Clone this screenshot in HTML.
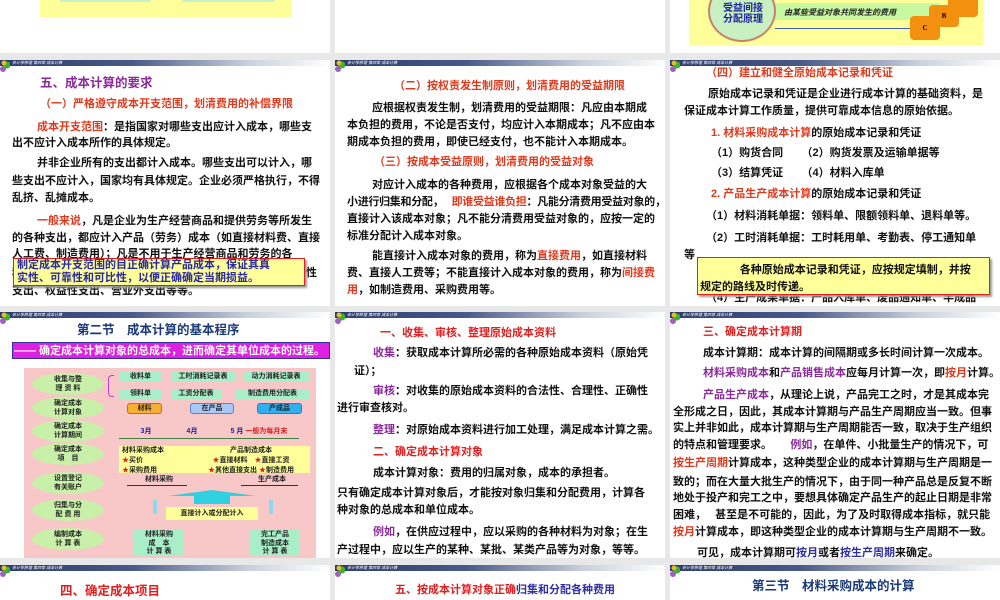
<!DOCTYPE html>
<html><head><meta charset="utf-8"><style>
*{margin:0;padding:0;box-sizing:border-box}
body{width:1000px;height:600px;background:#e8e8e8;position:relative;overflow:hidden;font-family:"Liberation Sans","Noto Sans CJK SC",sans-serif}
.s{position:absolute;background:#fff;overflow:hidden}
.hb{position:absolute;left:0;top:0;width:100%;height:6px;background:linear-gradient(90deg,#2a3a6a 0%,#4a5a88 40%,#c8d0dc 75%,#fff 100%)}
.hb i{position:absolute;left:12px;top:0;font-size:4px;color:#fff;font-style:italic;line-height:6px}
.lg{position:absolute;left:0;top:0;width:10px;height:12px}
.l{position:absolute;white-space:nowrap;font-weight:bold;font-size:11px;line-height:14px;color:#111}
.r{color:#e03a1e}.p{color:#8a2a9a}.b{color:#3030a0}.db{color:#1a3a7a}
.t{font-size:12.5px}
.box{position:absolute;background:#ffff99;border:1.5px solid #e02020;box-shadow:2px 2px 2px #999}
.el{position:absolute;left:8px;width:72px;height:22px;border-radius:50%;background:#c8f0a8;font-size:7px;font-weight:bold;color:#222;text-align:center;line-height:9px;padding-top:2px}
.g{position:absolute;background:#a8eec8;font-size:7px;font-weight:bold;text-align:center;line-height:10px;color:#222}
</style></head><body>

<!-- Row 1 -->
<div class="s" style="left:0;top:0;width:330px;height:53px">
 <div style="position:absolute;left:40px;top:0;width:252px;height:17px;background:#ffff99"></div>
 <div style="position:absolute;left:60px;top:0;width:91px;height:2px;background:#c8f0c8"></div>
 <div style="position:absolute;left:182px;top:0;width:93px;height:2px;background:#c8f0c8"></div>
</div>
<div class="s" style="left:335px;top:0;width:330px;height:53px"></div>
<div class="s" style="left:670px;top:0;width:330px;height:53px">
 <div style="position:absolute;left:19px;top:0;width:294px;height:45px;background:#ffff99"></div>
 <div style="position:absolute;left:100px;top:3px;width:170px;height:17px;background:#c8f8a0"></div>
 <div style="position:absolute;left:38px;top:-20px;width:68px;height:62px;border-radius:50%;background:#c8f0c0;border:2px solid #c88070"></div>
 <div class="l" style="left:53px;top:3px;color:#2020a0;font-size:10px;line-height:11px">受益间接<br>分配原理</div>
 <div class="l" style="left:114px;top:6px;font-style:italic;font-size:8px;color:#222">由某些受益对象共同发生的费用</div>
 <div style="position:absolute;left:105px;top:28px;width:140px;height:1px;background:#4060c0"></div>
 <div style="position:absolute;left:240px;top:25px;border-left:7px solid #4060c0;border-top:3px solid transparent;border-bottom:3px solid transparent"></div>
 <div style="position:absolute;left:278px;top:-5px;width:30px;height:22px;background:#f39010;border-radius:4px"></div>
 <div style="position:absolute;left:259px;top:5px;width:30px;height:22px;background:#f39010;border-radius:4px;font:bold 7px 'Liberation Serif';text-align:center;line-height:22px">B</div>
 <div style="position:absolute;left:240px;top:16px;width:30px;height:24px;background:#f39010;border-radius:4px;font:bold 7px 'Liberation Serif';text-align:center;line-height:24px">C</div>
</div>

<!-- Row 2 col1 -->
<div class="s" style="left:0;top:60px;width:330px;height:246px"><div class="hb"><i>会计学原理 第四章 成本计算</i></div></div>
<svg class="lg" style="left:0;top:60px"><circle cx="3" cy="9" r="3" fill="#a060c0"/><circle cx="7" cy="5" r="3.5" fill="#40b030"/><circle cx="4" cy="3" r="2.5" fill="#e0c020"/></svg>
<div class="l p t" style="left:40px;top:76px">五、成本计算的要求</div>
<div class="l r" style="left:40px;top:97px">（一）严格遵守成本开支范围，划清费用的补偿界限</div>
<div class="l" style="left:37px;top:120px"><span class="r">成本开支范围</span>：是指国家对哪些支出应计入成本，哪些支</div>
<div class="l" style="left:12px;top:136px">出不应计入成本所作的具体规定。</div>
<div class="l" style="left:37px;top:156px">并非企业所有的支出都计入成本。哪些支出可以计入，哪</div>
<div class="l" style="left:12px;top:174px">些支出不应计入，国家均有具体规定。企业必须严格执行，不得</div>
<div class="l" style="left:12px;top:191px">乱挤、乱摊成本。</div>
<div class="l" style="left:37px;top:214px"><span class="r">一般来说</span>，凡是企业为生产经营商品和提供劳务等所发生</div>
<div class="l" style="left:12px;top:231px">的各种支出，都应计入产品（劳务）成本（如直接材料费、直接</div>
<div class="l" style="left:12px;top:247px">人工费、制造费用）；凡是不用于生产经营商品和劳务的各</div>
<div class="l" style="left:12px;top:266px">种支出</div>
<div class="l" style="left:306px;top:266px">性</div>
<div class="l" style="left:12px;top:284px">支出、权益性支出、营业外支出等等。</div>
<div class="box" style="left:13px;top:258px;width:292px;height:28px"></div>
<div class="l" style="left:17px;top:259px;color:#2828a0;line-height:13px">制定成本开支范围的目正确计算产品成本，保证其真<br>实性、可靠性和可比性，以便正确确定当期损益。</div>

<!-- Row 2 col2 -->
<div class="s" style="left:335px;top:60px;width:330px;height:246px"><div class="hb"><i>会计学原理 第四章 成本计算</i></div></div>
<svg class="lg" style="left:335px;top:60px"><circle cx="3" cy="9" r="3" fill="#a060c0"/><circle cx="7" cy="5" r="3.5" fill="#40b030"/><circle cx="4" cy="3" r="2.5" fill="#e0c020"/></svg>
<div class="l r" style="left:394px;top:79px">（二）按权责发生制原则，划清费用的受益期限</div>
<div class="l" style="left:372px;top:101px">应根据权责发生制，划清费用的受益期限：凡应由本期成</div>
<div class="l" style="left:347px;top:118px">本负担的费用，不论是否支付，均应计入本期成本；凡不应由本</div>
<div class="l" style="left:347px;top:135px">期成本负担的费用，即使已经支付，也不能计入本期成本。</div>
<div class="l r" style="left:374px;top:155px">（三）按成本受益原则，划清费用的受益对象</div>
<div class="l" style="left:372px;top:178px">对应计入成本的各种费用，应根据各个成本对象受益的大</div>
<div class="l" style="left:347px;top:195px;letter-spacing:-0.3px">小进行归集和分配，&nbsp;&nbsp;&nbsp;<span class="r">即谁受益谁负担</span>：凡能分清费用受益对象的，</div>
<div class="l" style="left:347px;top:212px">直接计入该成本对象；凡不能分清费用受益对象的，应按一定的</div>
<div class="l" style="left:347px;top:229px">标准分配计入成本对象。</div>
<div class="l" style="left:372px;top:249px">能直接计入成本对象的费用，称为<span class="r">直接费用</span>，如直接材料</div>
<div class="l" style="left:347px;top:266px">费、直接人工费等；不能直接计入成本对象的费用，称为<span class="r">间接费</span></div>
<div class="l" style="left:347px;top:283px"><span class="r">用</span>，如制造费用、采购费用等。</div>

<!-- Row 2 col3 -->
<div class="s" style="left:670px;top:60px;width:330px;height:246px"><div class="hb"><i>会计学原理 第四章 成本计算</i></div></div>
<svg class="lg" style="left:670px;top:60px"><circle cx="3" cy="9" r="3" fill="#a060c0"/><circle cx="7" cy="5" r="3.5" fill="#40b030"/><circle cx="4" cy="3" r="2.5" fill="#e0c020"/></svg>
<div class="l r" style="left:706px;top:66px">（四）建立和健全原始成本记录和凭证</div>
<div class="l" style="left:708px;top:87px">原始成本记录和凭证是企业进行成本计算的基础资料，是</div>
<div class="l" style="left:684px;top:104px">保证成本计算工作质量，提供可靠成本信息的原始依据。</div>
<div class="l" style="left:711px;top:126px"><span class="r">1. 材料采购成本计算</span>的原始成本记录和凭证</div>
<div class="l" style="left:711px;top:146px">（1）购货合同&nbsp;&nbsp;&nbsp;&nbsp;&nbsp;&nbsp;（2）购货发票及运输单据等</div>
<div class="l" style="left:711px;top:166px">（3）结算凭证&nbsp;&nbsp;&nbsp;&nbsp;&nbsp;&nbsp;（4）材料入库单</div>
<div class="l" style="left:711px;top:187px"><span class="r">2. 产品生产成本计算</span>的原始成本记录和凭证</div>
<div class="l" style="left:706px;top:209px">（1）材料消耗单据：领料单、限额领料单、退料单等。</div>
<div class="l" style="left:706px;top:231px">（2）工时消耗单据：工时耗用单、考勤表、停工通知单</div>
<div class="l" style="left:684px;top:248px">等</div>
<div class="l" style="left:706px;top:291px">（4）生产成果单据：产品入库单、废品通知单、半成品</div>
<div class="box" style="left:697px;top:257px;width:293px;height:38px"></div>
<div class="l" style="left:700px;top:262px;line-height:17px">&nbsp;&nbsp;&nbsp;&nbsp;&nbsp;&nbsp;&nbsp;&nbsp;&nbsp;&nbsp;&nbsp;&nbsp;&nbsp;各种原始成本记录和凭证，应按规定填制，并按<br>规定的路线及时传递。</div>

<!-- Row 3 col1 -->
<div class="s" style="left:0;top:312px;width:330px;height:246px"><div class="hb"><i>会计学原理 第四章 成本计算</i></div></div>
<svg class="lg" style="left:0;top:312px"><circle cx="3" cy="9" r="3" fill="#a060c0"/><circle cx="7" cy="5" r="3.5" fill="#40b030"/><circle cx="4" cy="3" r="2.5" fill="#e0c020"/></svg>
<div class="l db t" style="left:77px;top:323px">第二节　成本计算的基本程序</div>
<div style="position:absolute;left:12px;top:342px;width:318px;height:17px;background:#e020e0;border:1px solid #3030a0"></div>
<div class="l" style="left:14px;top:344px;color:#fff">—— 确定成本计算对象的总成本，进而确定其单位成本的过程。</div>
<div style="position:absolute;left:24px;top:368px;width:292px;height:190px;background:#f8c8c8">
 <div class="el" style="top:5px">收集与整<br>理 资 料</div>
 <div class="el" style="top:29px">确定成本<br>计算对象</div>
 <div class="el" style="top:52px">确定成本<br>计算期间</div>
 <div class="el" style="top:75px">确定成本<br>项　目</div>
 <div class="el" style="top:104px">设置登记<br>有关账户</div>
 <div class="el" style="top:131px">归集与分<br>配 费 用</div>
 <div class="el" style="top:160px">编制成本<br>计 算 表</div>
 <div style="position:absolute;left:84px;top:7px;width:6px;height:22px;border:1px solid #c040c0;border-right:none;border-radius:4px 0 0 4px"></div>
 <div class="g" style="left:95px;top:4px;width:43px;height:10px">收料单</div>
 <div class="g" style="left:147px;top:4px;width:64px;height:10px">工时消耗记录表</div>
 <div class="g" style="left:219px;top:4px;width:66px;height:10px">动力消耗记录表</div>
 <div class="g" style="left:95px;top:21px;width:43px;height:10px">领料单</div>
 <div class="g" style="left:147px;top:21px;width:50px;height:10px">工资分配表</div>
 <div class="g" style="left:212px;top:21px;width:73px;height:10px">制造费用分配表</div>
 <div class="g" style="left:103px;top:35px;width:35px;height:11px;background:#f8b030;border:1px solid #c07010;border-radius:3px">材料</div>
 <div class="g" style="left:166px;top:35px;width:44px;height:11px;background:#a8c8f8;border:1px solid #6080c0;border-radius:3px">在产品</div>
 <div class="g" style="left:233px;top:35px;width:45px;height:11px;background:#30b0f0;border:1px solid #2080c0;border-radius:3px">产成品</div>
 <div style="position:absolute;left:95px;top:70px;width:180px;height:1px;background:#408040"></div>
 <div class="g" style="left:112px;top:59px;width:20px;background:none;color:#2020a0">3月</div>
 <div class="g" style="left:158px;top:59px;width:20px;background:none;color:#2020a0">4月</div>
 <div class="g" style="left:200px;top:59px;width:70px;background:none;color:#2020a0">5 月 <span style="color:#e02020">一般为每月末</span></div>
 <div class="g" style="left:95px;top:78px;width:82px;height:27px;background:#ffff99;text-align:left;padding-left:3px">材料采购成本<br><span style="color:#e02020">★</span>买价<br><span style="color:#e02020">★</span>采购费用</div>
 <div class="g" style="left:168px;top:78px;width:118px;height:27px;background:#ffff99">产品制造成本<br><span style="color:#e02020">★</span>直接材料　<span style="color:#e02020">★</span>直接工资<br><span style="color:#e02020">★</span>其他直接支出 <span style="color:#e02020">★</span>制造费用</div>
 <div style="position:absolute;left:103px;top:117px;width:60px;height:1px;background:#333"></div>
 <div style="position:absolute;left:217px;top:117px;width:57px;height:1px;background:#333"></div>
 <div class="g" style="left:115px;top:107px;width:40px;background:none">材料采购</div>
 <div class="g" style="left:228px;top:107px;width:40px;background:none">生产成本</div>
 <div style="position:absolute;left:170px;top:128px;width:36px;height:8px;background:#30d0e0"></div>
 <div style="position:absolute;left:144px;top:122px;width:0;border-left:44px solid transparent;border-right:44px solid transparent;border-bottom:6px solid #30d0e0"></div>
 <div style="position:absolute;left:129px;top:132px;width:4px;height:14px;background:#90d8f0"></div>
 <div style="position:absolute;left:245px;top:132px;width:4px;height:14px;background:#90d8f0"></div>
 <div class="g" style="left:142px;top:139px;width:92px;height:13px;background:#ffff99;line-height:13px">直接计入或分配计入</div>
 <div class="g" style="left:110px;top:162px;width:50px;height:26px;line-height:8.5px;padding-top:1px">材料采购<br>成　本<br>计 算 表</div>
 <div class="g" style="left:226px;top:162px;width:50px;height:26px;line-height:8.5px;padding-top:1px">完工产品<br>制造成本<br>计 算 表</div>
</div>

<!-- Row 3 col2 -->
<div class="s" style="left:335px;top:312px;width:330px;height:246px"><div class="hb"><i>会计学原理 第四章 成本计算</i></div></div>
<svg class="lg" style="left:335px;top:312px"><circle cx="3" cy="9" r="3" fill="#a060c0"/><circle cx="7" cy="5" r="3.5" fill="#40b030"/><circle cx="4" cy="3" r="2.5" fill="#e0c020"/></svg>
<div class="l r" style="left:380px;top:326px;color:#e02020">一、收集、审核、整理原始成本资料</div>
<div class="l" style="left:373px;top:346px"><span class="p">收集</span>：获取成本计算所必需的各种原始成本资料（原始凭</div>
<div class="l" style="left:354px;top:364px">证）；</div>
<div class="l" style="left:373px;top:384px"><span class="p">审核</span>：对收集的原始成本资料的合法性、合理性、正确性</div>
<div class="l" style="left:337px;top:401px">进行审查核对。</div>
<div class="l" style="left:373px;top:423px"><span class="p">整理</span>：对原始成本资料进行加工处理，满足成本计算之需。</div>
<div class="l" style="left:373px;top:445px;color:#e02020">二、确定成本计算对象</div>
<div class="l" style="left:373px;top:466px">成本计算对象：费用的归属对象，成本的承担者。</div>
<div class="l" style="left:337px;top:486px">只有确定成本计算对象后，才能按对象归集和分配费用，计算各</div>
<div class="l" style="left:337px;top:503px">种对象的总成本和单位成本。</div>
<div class="l" style="left:373px;top:525px"><span class="p">例如</span>，在供应过程中，应以采购的各种材料为对象；在生</div>
<div class="l" style="left:337px;top:543px">产过程中，应以生产的某种、某批、某类产品等为对象，等等。</div>

<!-- Row 3 col3 -->
<div class="s" style="left:670px;top:312px;width:330px;height:246px"><div class="hb"><i>会计学原理 第四章 成本计算</i></div></div>
<svg class="lg" style="left:670px;top:312px"><circle cx="3" cy="9" r="3" fill="#a060c0"/><circle cx="7" cy="5" r="3.5" fill="#40b030"/><circle cx="4" cy="3" r="2.5" fill="#e0c020"/></svg>
<div class="l" style="left:703px;top:325px;color:#e02020">三、确定成本计算期</div>
<div class="l" style="left:703px;top:346px">成本计算期：成本计算的间隔期或多长时间计算一次成本。</div>
<div class="l" style="left:703px;top:366px"><span class="p">材料采购成本</span>和<span class="p">产品销售成本</span>应每月计算一次，即<span class="r">按月</span>计算。</div>
<div class="l" style="left:703px;top:388px"><span class="p">产品生产成本</span>，从理论上说，产品完工之时，才是其成本完</div>
<div class="l" style="left:673px;top:405px">全形成之日，因此，其成本计算期与产品生产周期应当一致。但事</div>
<div class="l" style="left:673px;top:421px">实上并非如此，成本计算期与生产周期能否一致，取决于生产组织</div>
<div class="l" style="left:673px;top:438px">的特点和管理要求。&nbsp;&nbsp;&nbsp;&nbsp;&nbsp;&nbsp;<span class="p">例如</span>，在单件、小批量生产的情况下，可</div>
<div class="l" style="left:673px;top:456px"><span class="r">按生产周期</span>计算成本，这种类型企业的成本计算期与生产周期是一</div>
<div class="l" style="left:673px;top:475px">致的；而在大量大批生产的情况下，由于同一种产品总是反复不断</div>
<div class="l" style="left:673px;top:491px">地处于投产和完工之中，要想具体确定产品生产的起止日期是非常</div>
<div class="l" style="left:673px;top:508px">困难，&nbsp;&nbsp;&nbsp;甚至是不可能的，因此，为了及时取得成本指标，就只能</div>
<div class="l" style="left:673px;top:525px"><span class="r">按月</span>计算成本，即这种类型企业的成本计算期与生产周期不一致。</div>
<div class="l" style="left:697px;top:546px">可见，成本计算期可<span class="b">按月</span>或者<span class="b">按生产周期</span>来确定。</div>

<!-- Row 4 -->
<div class="s" style="left:0;top:565px;width:330px;height:35px"><div class="hb"><i>会计学原理 第四章 成本计算</i></div></div>
<svg class="lg" style="left:0;top:565px"><circle cx="3" cy="9" r="3" fill="#a060c0"/><circle cx="7" cy="5" r="3.5" fill="#40b030"/><circle cx="4" cy="3" r="2.5" fill="#e0c020"/></svg>
<div class="l t" style="left:60px;top:584px;color:#e02020">四、确定成本项目</div>
<div class="s" style="left:335px;top:565px;width:330px;height:35px"><div class="hb"><i>会计学原理 第四章 成本计算</i></div></div>
<svg class="lg" style="left:335px;top:565px"><circle cx="3" cy="9" r="3" fill="#a060c0"/><circle cx="7" cy="5" r="3.5" fill="#40b030"/><circle cx="4" cy="3" r="2.5" fill="#e0c020"/></svg>
<div class="l" style="left:395px;top:583px;color:#e02020">五、按成本计算对象正确<span class="b">归集和分配各种费用</span></div>
<div class="s" style="left:670px;top:565px;width:330px;height:35px"><div class="hb"><i>会计学原理 第四章 成本计算</i></div></div>
<svg class="lg" style="left:670px;top:565px"><circle cx="3" cy="9" r="3" fill="#a060c0"/><circle cx="7" cy="5" r="3.5" fill="#40b030"/><circle cx="4" cy="3" r="2.5" fill="#e0c020"/></svg>
<div class="l db t" style="left:752px;top:579px">第三节　材料采购成本的计算</div>
</body></html>
